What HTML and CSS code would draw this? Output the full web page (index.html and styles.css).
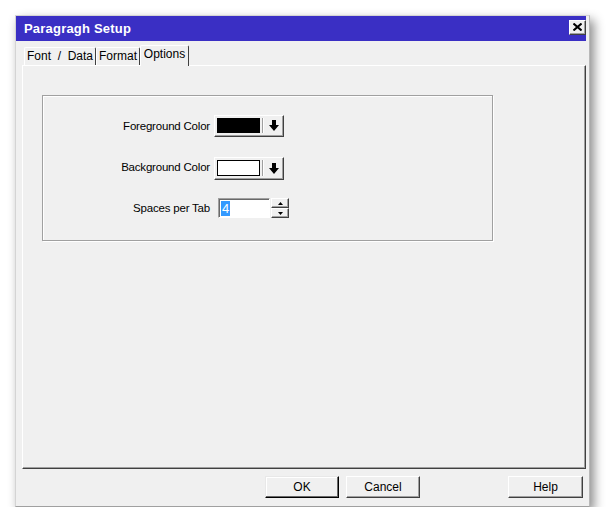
FILE: index.html
```html
<!DOCTYPE html>
<html lang="en">
<head>
    <meta charset="UTF-8">
    <title>Paragragh Setup</title>
    <link rel="stylesheet" href="styles.css">
</head>
<body>
    <div class="window">
        <div class="titlebar">
            <span class="title">Paragragh Setup</span>
            <div class="close">
                <svg width="9" height="8" viewBox="0 0 9 8">
                    <path d="M0.5 0.5 L8.5 7.5 M8.5 0.5 L0.5 7.5" stroke="#000" stroke-width="2" fill="none"/>
                </svg>
            </div>
        </div>

        <!-- Tab strip -->
        <div class="tabs">
            <div class="tab tab-font">Font &nbsp;/ &nbsp;Data</div>
            <div class="tab tab-format">Format</div>
            <div class="tab tab-options active">Options</div>
        </div>

        <div class="panel">
            <div class="groupbox">
                <div class="row row-fg">
                    <span class="label">Foreground Color</span>
                    <div class="color-combo">
                        <span class="swatch black"></span>
                        <span class="divider"></span>
                        <svg class="arrow" width="10" height="11" viewBox="0 0 10 11">
                            <path d="M3 0 H7 V5 H10 L5 11 L0 5 H3 Z" fill="#000"/>
                        </svg>
                    </div>
                </div>
                <div class="row row-bg">
                    <span class="label">Background Color</span>
                    <div class="color-combo">
                        <span class="swatch white"></span>
                        <span class="divider"></span>
                        <svg class="arrow" width="10" height="11" viewBox="0 0 10 11">
                            <path d="M3 0 H7 V5 H10 L5 11 L0 5 H3 Z" fill="#000"/>
                        </svg>
                    </div>
                </div>
                <div class="row row-tab">
                    <span class="label">Spaces per Tab</span>
                    <div class="spin-edit">
                        <div class="edit"><span class="sel">4</span></div>
                        <div class="spin">
                            <div class="spin-btn">
                                <svg width="5" height="3" viewBox="0 0 5 3"><path d="M2.5 0 L5 3 H0 Z" fill="#000"/></svg>
                            </div>
                            <div class="spin-btn">
                                <svg width="5" height="3" viewBox="0 0 5 3"><path d="M0 0 H5 L2.5 3 Z" fill="#000"/></svg>
                            </div>
                        </div>
                    </div>
                </div>
            </div>
        </div>

        <div class="buttons">
            <button class="btn default">OK</button>
            <button class="btn">Cancel</button>
            <button class="btn help">Help</button>
        </div>
    </div>
</body>
</html>
```

FILE: styles.css
```css
/* General Reset */
* {
    margin: 0;
    padding: 0;
    box-sizing: border-box;
}

body {
    font-family: "Liberation Sans", Arial, sans-serif;
    font-size: 11px;
    color: #000;
    background-color: #fff;
}

.window {
    margin: 15px 0 0 15px;
    width: 575px;
    height: 492px;
    background-color: #f0f0f0;
    border: 1px solid #d4d4d4;
    border-right-color: #b8b8b8;
    border-bottom-color: #a0a0a0;
    padding-right: 3px;
    box-shadow: 4px 5px 10px rgba(0, 0, 0, 0.45);
    display: flex;
    flex-direction: column;
}

/* Title bar */
.titlebar {
    height: 25px;
    background-color: #3a2fc4;
    color: #fff;
    display: flex;
    align-items: center;
    justify-content: space-between;
    padding-left: 8px;
}

.title {
    font-size: 13px;
    font-weight: bold;
    letter-spacing: 0.2px;
}

.close {
    width: 17px;
    height: 15px;
    margin-top: -3px;
    background-color: #f0f0f0;
    border: 1px solid;
    border-color: #fff #404040 #404040 #fff;
    box-shadow: inset -1px -1px 0 #a0a0a0;
    display: flex;
    justify-content: center;
    align-items: center;
}

/* Tabs */
.tabs {
    display: flex;
    align-items: flex-end;
    height: 24px;
    padding-left: 8px;
}

.tab {
    height: 18px;
    line-height: 17px;
    text-align: center;
    font-size: 12px;
    border-top: 1px solid #fff;
    border-left: 1px solid #fff;
    border-right: 1px solid #404040;
    border-radius: 2px 2px 0 0;
}

.tab-font {
    width: 72px;
}

.tab-format {
    width: 44px;
}

.tab-options {
    width: 49px;
}

.tab.active {
    height: 21px;
    line-height: 17px;
    margin-bottom: -1px;
    background-color: #f0f0f0;
    position: relative;
    z-index: 1;
}

.panel {
    height: 404px;
    margin-left: 6px;
    border: 1px solid;
    border-color: #fff #404040 #404040 #fff;
    box-shadow: inset -1px -1px 0 #a0a0a0;
    padding: 29px 0 0 19px;
}

/* Group box */
.groupbox {
    width: 451px;
    height: 146px;
    border: 1px solid #a0a0a0;
    box-shadow: inset 1px 1px 0 #fff, 1px 1px 0 #fff;
    padding-top: 19px;
}

.row {
    display: flex;
    align-items: center;
}

.label {
    width: 167px;
    text-align: right;
    font-size: 11.5px;
    letter-spacing: -0.2px;
}

.row-fg {
    height: 22px;
}

.row-bg {
    height: 23px;
    margin-top: 20px;
}

.row-bg .label {
    margin-top: -4px;
}

.row-tab {
    height: 20px;
    margin-top: 18px;
}

.color-combo {
    width: 70px;
    height: 100%;
    margin-left: 4px;
    border: 1px solid;
    border-color: #fff #404040 #404040 #fff;
    box-shadow: inset -1px -1px 0 #a0a0a0;
    display: flex;
    align-items: center;
    padding: 2px 0 3px 2px;
}

.swatch {
    width: 43px;
    height: 100%;
}

.swatch.black {
    background-color: #000;
}

.swatch.white {
    background-color: #fff;
    border: 1px solid #000;
}

.divider {
    width: 2px;
    height: 100%;
    margin-left: 2px;
    border-left: 1px solid #a0a0a0;
    border-right: 1px solid #fff;
}

.arrow {
    margin-left: 5px;
}

/* Spin edit */
.spin-edit {
    display: flex;
    margin-left: 8px;
    height: 100%;
}

.edit {
    width: 52px;
    height: 20px;
    background-color: #fff;
    border: 1px solid;
    border-color: #a0a0a0 #fff #fff #a0a0a0;
    box-shadow: inset 1px 1px 0 #696969;
    padding: 2px 0 0 2px;
    font-size: 13px;
    line-height: 15px;
}

.sel {
    background-color: #3399ff;
    color: #fff;
    padding: 0 1px;
}

.spin {
    width: 18px;
    margin-left: 1px;
    display: flex;
    flex-direction: column;
}

.spin-btn {
    height: 10px;
    border: 1px solid;
    border-color: #fff #404040 #404040 #fff;
    box-shadow: inset -1px -1px 0 #a0a0a0;
    display: flex;
    justify-content: center;
    align-items: center;
}

/* Bottom buttons */
.buttons {
    display: flex;
    margin-top: 7px;
    padding: 0 3px 0 249px;
    gap: 7px;
}

.btn {
    width: 74px;
    height: 22px;
    font-family: "Liberation Sans", Arial, sans-serif;
    font-size: 12px;
    background-color: #f0f0f0;
    border: 1px solid;
    border-color: #fff #404040 #404040 #fff;
    box-shadow: inset -1px -1px 0 #a0a0a0;
    color: #000;
}

.btn.default {
    border-color: #e8e8e8 #000 #000 #e8e8e8;
    box-shadow: inset -1px -1px 0 #696969, inset 1px 1px 0 #fff;
}

.btn.help {
    width: 75px;
    margin-left: auto;
}
```
